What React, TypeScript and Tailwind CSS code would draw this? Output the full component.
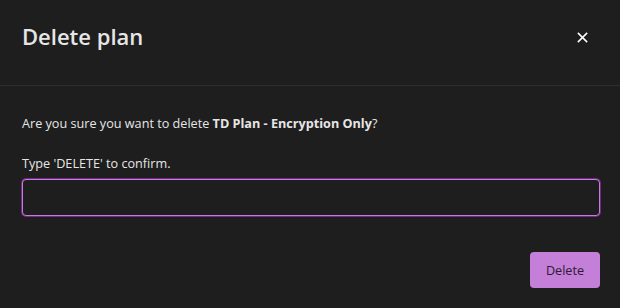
import React from "react";

export default function App() {
  return (
    <div
      className="w-[620px] h-[308px] bg-[#1e1e1e] text-[#e6e6e6] flex flex-col"
      style={{ fontFamily: '"Open Sans", "Noto Sans", sans-serif' }}
    >
      {/* Header */}
      <div className="h-[86px] shrink-0 flex items-center justify-between pl-[22px] pr-[31px] border-b border-[#2e2e2e]">
        <h2 className="text-[22px] font-semibold leading-none -mt-[13px]">Delete plan</h2>
        <button className="text-white -mt-[10px]" aria-label="Close">
          <svg width="13" height="13" viewBox="0 0 14 14" fill="none" stroke="currentColor" strokeWidth="1.6">
            <path d="M2 2L12 12M12 2L2 12" />
          </svg>
        </button>
      </div>

      {/* Body */}
      <div className="pl-[22px] pr-[20px] pt-[28px] flex flex-col">
        <p className="text-[12.65px] leading-[18px]">
          Are you sure you want to delete <span className="font-bold">TD Plan - Encryption Only</span>?
        </p>
        <label className="text-[12.65px] leading-[18px] mt-[22px]">Type 'DELETE' to confirm.</label>
        <input
          className="mt-[7px] h-[37px] w-full rounded-[4px] bg-[#1e1e1e] border border-[#c77dd7] outline-none ring-1 ring-[#6e2a84] text-[13px] px-3"
        />
        <div className="flex justify-end mt-[36px]">
          <button className="h-[36px] w-[70px] rounded-[4px] bg-[#c47fd8] text-[#2e1934] text-[12.65px]">
            Delete
          </button>
        </div>
      </div>
    </div>
  );
}
